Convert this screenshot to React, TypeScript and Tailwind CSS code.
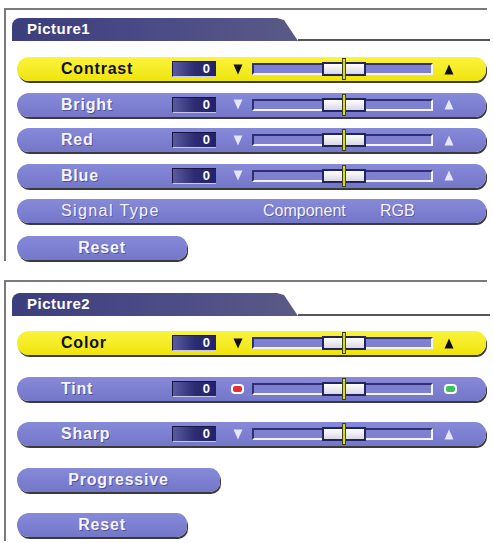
import React from "react";

const FONT = { fontFamily: '"Liberation Sans", Arial, sans-serif' };

function Tri({ up, color }: { up?: boolean; color: string }) {
  return (
    <svg width="10" height="11" viewBox="0 0 10 11" className="shrink-0">
      {up ? (
        <polygon points="5,0.5 9.5,10.5 0.5,10.5" fill={color} />
      ) : (
        <polygon points="0.5,0.5 9.5,0.5 5,10.5" fill={color} />
      )}
    </svg>
  );
}

function Dot({ color }: { color: string }) {
  return (
    <div
      className="w-[13px] h-[10px] rounded-[4px] border-2 border-white shrink-0"
      style={{ background: color }}
    />
  );
}

function Track() {
  return (
    <div className="relative w-[181px] h-[12px] bg-[#7f80d2] border-t-2 border-l-2 border-[#2f3070] border-b-2 border-r-2 border-b-[#f4f4ff] border-r-[#f4f4ff] shrink-0">
      <div className="absolute left-[68px] top-[-3px] w-[44px] h-[14px] border-2 border-[#22245e] bg-gradient-to-b from-white to-[#d8d8e6]" />
      <div className="absolute left-[88px] top-[-7px] w-[4px] h-[22px] bg-[#d8e000] border border-[#404020]" />
    </div>
  );
}

type Kind = "slider" | "tint";

function Row({
  label,
  active,
  kind = "slider",
}: {
  label: string;
  active?: boolean;
  kind?: Kind;
}) {
  const arrowColor = active ? "#111111" : "#e4e5ff";
  const tint = kind === "tint";
  return (
    <div
      className={`flex items-center w-[469px] h-[24px] rounded-l-[12px] rounded-r-[11px] shadow-[1px_2px_0_#3a3a3a] ${
        active
          ? "bg-gradient-to-b from-[#fbf33a] to-[#efe400]"
          : "bg-gradient-to-b from-[#8789d9] to-[#7476c8]"
      }`}
    >
      <div
        className={`w-[155px] pl-[44px] text-[16px] font-bold tracking-[0.8px] shrink-0 ${
          active
            ? "text-[#111111]"
            : "text-[#f4f4ff] [text-shadow:1px_1px_0_rgba(30,30,80,0.45)]"
        }`}
      >
        {label}
      </div>
      <div className="w-[44px] h-[16px] bg-gradient-to-r from-[#5a5aa0] via-[#2c2c72] to-[#22226a] border-t border-l border-[#15153f] border-b border-b-[#c8c8ee] flex items-center justify-end pr-[6px] text-white text-[13px] font-bold shrink-0">
        0
      </div>
      <div className={`${tint ? "w-[15px]" : "w-[17px]"} shrink-0`} />
      {tint ? <Dot color="#e0303a" /> : <Tri color={arrowColor} />}
      <div className={`${tint ? "w-[8px]" : "w-[9px]"} shrink-0`} />
      <Track />
      <div className="w-[11px] shrink-0" />
      {tint ? <Dot color="#3cc060" /> : <Tri up color={arrowColor} />}
    </div>
  );
}

function Button({ label, w }: { label: string; w: string }) {
  return (
    <div
      className={`flex items-center justify-center ${w} h-[24px] rounded-l-[12px] rounded-r-[10px] shadow-[1px_2px_0_#3a3a3a] bg-gradient-to-b from-[#8789d9] to-[#7476c8] text-[16px] font-bold tracking-[0.8px] text-[#f4f4ff] [text-shadow:1px_1px_0_rgba(30,30,80,0.45)]`}
    >
      {label}
    </div>
  );
}

function SignalRow() {
  return (
    <div className="flex items-center w-[469px] h-[24px] rounded-l-[12px] rounded-r-[11px] shadow-[1px_2px_0_#3a3a3a] bg-gradient-to-b from-[#8789d9] to-[#7476c8] text-[16px] text-[#f4f4ff] [text-shadow:1px_1px_0_rgba(30,30,80,0.35)]">
      <div className="w-[246px] pl-[44px] tracking-[1.4px] shrink-0">Signal Type</div>
      <div className="w-[117px] shrink-0">Component</div>
      <div>RGB</div>
    </div>
  );
}

function Tab({ title }: { title: string }) {
  return (
    <div className="flex items-end w-[478px] ml-[6px]">
      <div className="w-[286px] h-[23px] rounded-tl-[8px] bg-gradient-to-r from-[#3c3d7c] via-[#4b4b86] to-[#5a5a86] [clip-path:polygon(0_0,265px_0,272px_2px,286px_100%,0_100%)] flex items-center pl-[15px] text-white text-[15px] font-bold tracking-[0.5px] shrink-0">
        {title}
      </div>
      <div className="flex-1 h-[2px] bg-[#555555]" />
    </div>
  );
}

export default function App() {
  return (
    <div className="w-[493px] h-[543px] bg-white overflow-hidden pt-[8px]" style={FONT}>
      <div className="ml-[4px] w-[483px] border-t-2 border-l-2 border-[#7a7a7a] pt-[8px] pb-[1px]">
        <Tab title="Picture1" />
        <div className="flex flex-col gap-[11.5px] ml-[11px] mt-[16px]">
          <Row label="Contrast" active />
          <Row label="Bright" />
          <Row label="Red" />
          <Row label="Blue" />
          <SignalRow />
          <div className="mt-[1.5px]">
            <Button label="Reset" w="w-[170px]" />
          </div>
        </div>
      </div>
      <div className="ml-[4px] mt-[19px] w-[483px] border-t-2 border-l-2 border-[#7a7a7a] pt-[11px] pb-[4px]">
        <Tab title="Picture2" />
        <div className="flex flex-col gap-[21.5px] ml-[11px] mt-[15px]">
          <Row label="Color" active />
          <Row label="Tint" kind="tint" />
          <Row label="Sharp" />
          <Button label="Progressive" w="w-[203px]" />
          <Button label="Reset" w="w-[170px]" />
        </div>
      </div>
    </div>
  );
}
